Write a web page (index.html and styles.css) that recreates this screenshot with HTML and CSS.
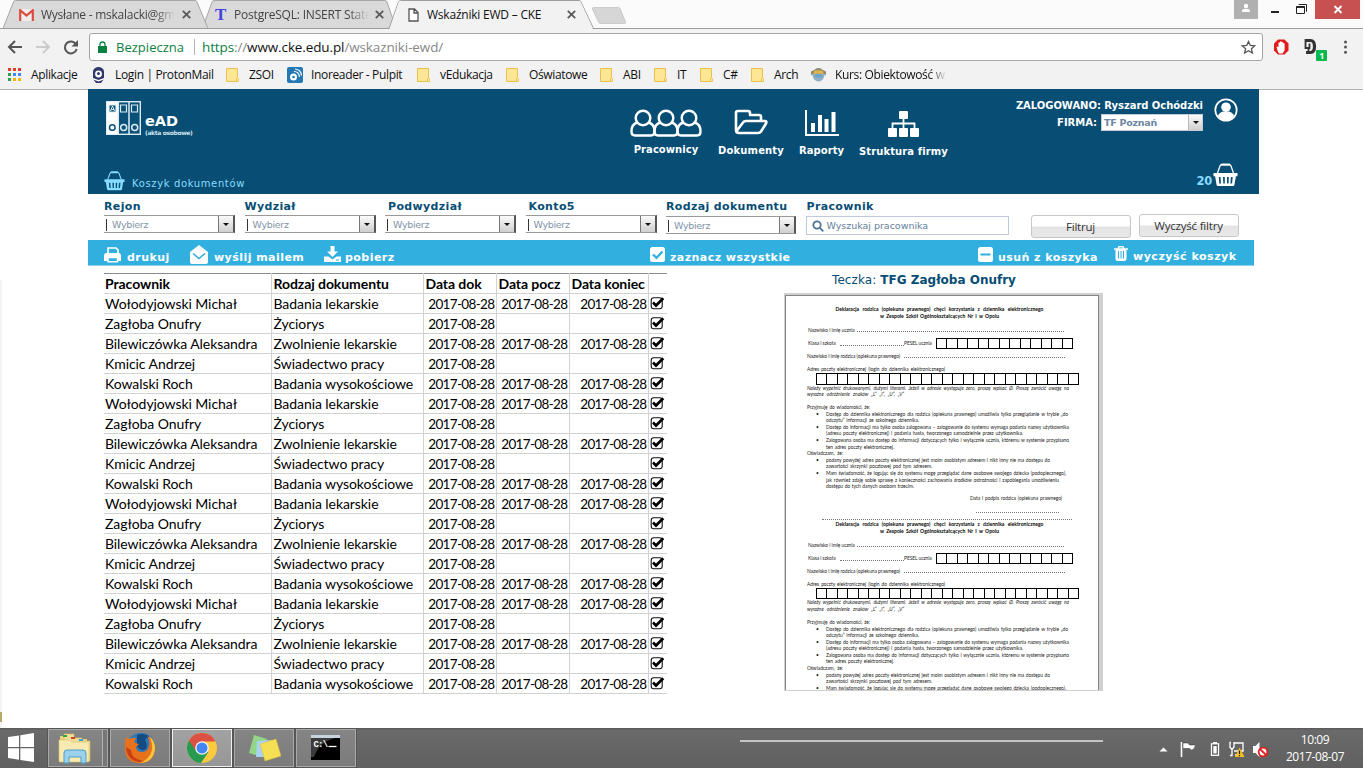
FILE: index.html
```html
<!DOCTYPE html>
<html lang="pl">
<head>
<meta charset="utf-8">
<title>Wskaźniki EWD – CKE</title>
<link rel="stylesheet" href="styles.css">
</head>
<body>
<svg width="0" height="0" class="defs">
  <symbol id="basket" viewBox="0 0 24 24"><path d="M4 10 6.500 3Q7 1.500 8.500 1.500" fill="none" stroke="currentColor" stroke-width="1.300"/><path d="M20 10 17.500 3Q17 1.500 15.500 1.500" fill="none" stroke="currentColor" stroke-width="1.300"/><rect x="7.500" y="0.400" width="9" height="2.400" rx="1.200" fill="currentColor"/><path d="M0 10h24v3.200h-1.600L21 21.500q-.2 1.500-1.500 1.500h-15Q3.200 23 3 21.500L1.600 13.200H0zM5.300 14l.5 6.500h1.700L7 14zm4.200 0 .3 6.500h1.500V14zm4 0v6.500H15l.3-6.500zm3.900 0-.5 6.500h1.700l.6-6.500z" fill="currentColor"/></symbol>
  <symbol id="person" viewBox="0 0 26 28"><path d="M7.500 13.500C3.500 14.500 1.500 18 1.500 22.500c0 2.800 1.500 4 3.500 4h16c2 0 3.500-1.200 3.500-4 0-4.500-2-8-6-9" fill="none" stroke="currentColor" stroke-width="2.400"/><circle cx="13" cy="9" r="7.300" fill="none" stroke="currentColor" stroke-width="2.400"/></symbol>
  <symbol id="folder" viewBox="0 0 14 17"><path d="M.5 2.500h11v9l-1 1.500v2.500H.5z" fill="#ffe694" stroke="#e9bf4d"/><path d="M10.500 15.500v-3l1-1 1 1v3z" fill="#ffe694" stroke="#e9bf4d" stroke-width=".8"/></symbol>
  <symbol id="close" viewBox="0 0 8 8"><path d="m.7.7 6.600 6.600m0-6.600L.7 7.300" stroke="#5a5a5a" stroke-width="1.600"/></symbol>
  <symbol id="check" viewBox="0 0 15 14"><rect x="1.200" y="1.800" width="11" height="11" rx="2.500" fill="#fff" stroke="#111" stroke-width="1.100"/><path d="m3 6.500 3 3 7.300-7.200" fill="none" stroke="#000" stroke-width="2.700"/></symbol>
</svg>

<div class="browser">
  <div class="tabs">
    <svg class="tabs-bg" width="640" height="29" viewBox="0 0 640 29">
      <path d="M202.500 28.500 212 2q.5-1.500 2-1.500h171q1.500 0 2 1.500l9 26.500z" fill="#d9d9d9" stroke="#a7a7a7"/>
      <path d="M3 28.500 13.500 2Q14 .5 15.500.5H195q1.500 0 2 1.500l11 26.500z" fill="#d9d9d9" stroke="#a7a7a7"/>
      <path d="M0 28.500h389L398.500 2q.5-1.500 2-1.500H579q1.500 0 2 1.500l12.500 26.500H640" fill="none" stroke="#9d9d9d"/>
      <path d="M389.500 29 398.800 2q.6-1 1.700-1H579q1 0 1.600 1L593 29z" fill="#f2f2f2"/>
      <path d="M592.500 9q-.5-1.500 1-1.500h25q1.200 0 1.800 1.500l5.200 13q.5 1.500-1 1.500h-24q-1.500 0-2-1.500z" fill="#d6d6d6" stroke="#cacaca"/>
    </svg>
    <div class="tab t1"><svg width="15" height="12" viewBox="0 0 15 12"><path d="M1 0h13v12H1z" fill="#eee"/><path d="M1.200 12V1.200L7.500 6.500l6.300-5.300V12" fill="none" stroke="#dd4b3e" stroke-width="2.200"/></svg><span class="tab-title fade">Wysłane - mskalacki@gm</span><svg width="9" height="9"><use href="#close"/></svg></div>
    <div class="tab t2"><b class="tico">T</b><span class="tab-title fade">PostgreSQL: INSERT State</span><svg width="9" height="9"><use href="#close"/></svg></div>
    <div class="tab t3"><svg width="11" height="14" viewBox="0 0 11 14"><path d="M1 1h5.500L10 4.500V13H1zM6 1v4h4" fill="#fff" stroke="#555" stroke-width="1.300"/></svg><span class="tab-title">Wskaźniki EWD – CKE</span><svg width="9" height="9"><use href="#close"/></svg></div>
    <div class="winbtns">
      <div class="user"><svg width="24" height="19"><circle cx="12" cy="6" r="2.200" fill="#fff"/><path d="M8 12V11q0-2.200 4-2.200t4 2.200v1z" fill="#fff"/></svg></div>
      <svg width="57" height="19"><path d="M13 12h8" stroke="#222" stroke-width="2"/><path d="M38.500 6.500h8v7h-8zM41 5V4.500h7.500v7H48" fill="none" stroke="#222"/><path d="M38 7.200h9" stroke="#222" stroke-width="1.500"/></svg>
      <div class="x"><svg width="45" height="19"><path d="m19.500 6 7 7m0-7-7 7" stroke="#fff" stroke-width="1.900"/></svg></div>
    </div>
  </div>
  <div class="toolbar">
    <svg width="89" height="32" viewBox="0 29 89 32" fill="none"><path d="M22 47H9m6-6-6 6 6 6" stroke="#555" stroke-width="2"/><path d="M36 47h13m-6-6 6 6-6 6" stroke="#ccc" stroke-width="2"/><path d="M76 44.200A6 6 0 1 0 76.700 49" stroke="#555" stroke-width="2"/><path d="M78 40v6.500h-6.500z" fill="#555"/></svg>
    <div class="omni">
      <svg width="9" height="12" viewBox="0 0 9 12"><path d="M0 5h9v7H0z" fill="#0b8043"/><path d="M2 5.500V3.300Q2 1 4.500 1T7 3.300v2.200" fill="none" stroke="#0b8043" stroke-width="1.300"/></svg>
      <span class="secure">Bezpieczna</span><span class="url"><em>https</em>://<b>www.cke.edu.pl</b>/wskazniki-ewd/</span>
      <svg class="star" width="15" height="15" viewBox="0 0 15 15"><path d="m7.500 1.500 1.800 4 4.400.4-3.300 2.900 1 4.200-3.900-2.300L3.600 13l1-4.200L1.300 5.900l4.400-.4z" fill="none" stroke="#555" stroke-width="1.300"/></svg>
    </div>
    <svg width="100" height="32" viewBox="1263 29 100 32"><path d="M1278 39.500h6.500l4 4v7l-4 4H1278l-4-4v-7z" fill="#e01b1b"/><path d="m1278 52-1.500-5 1.300-.5.700 1v-5h1.500v-1h1.700v.7h1.500v1h1.400v7l-2 3.300h-3.500z" fill="#fff"/><path d="M1306 40.500h4.500q4 0 4 6t-4 6h-4.500" fill="none" stroke="#333" stroke-width="3.200"/><path d="M1305.500 39v9h4v-4.500M1308.500 47v6" fill="none" stroke="#333" stroke-width="1.800"/><rect x="1316" y="50" width="11" height="11" rx="1" fill="#07b84f"/><text x="1319.300" y="59" class="badge">1</text><g fill="#555"><circle cx="1345.500" cy="42" r="1.500"/><circle cx="1345.500" cy="47" r="1.500"/><circle cx="1345.500" cy="52.200" r="1.500"/></g></svg>
  </div>
  <div class="bookmarks">
    <div class="bm b1"><svg width="14" height="14"><g fill="#e33b2e"><path d="M0 0h3v3H0zM5 0h3v3H5zM10 0h3v3h-3z"/></g><path d="M0 5h3v3H0zM0 10h3v3H0z" fill="#2d9d59"/><path d="M5 5h3v3H5zM10 5h3v3h-3z" fill="#4285f4"/><path d="M5 10h3v3H5zM10 10h3v3h-3z" fill="#f4b400"/></svg><span>Aplikacje</span></div>
    <div class="bm b2"><svg width="13" height="16" viewBox="0 0 13 16"><path d="M1 4q1.500-4 5.500-4T12 4v8l-3 4H4l-3-4z" fill="#33386b"/><circle cx="6.500" cy="7" r="3.400" fill="#fff"/><circle cx="6.500" cy="6.500" r="1.500" fill="#33386b"/><path d="m1 11 5.500 2 5.500-2v1.500l-5.500 2-5.500-2z" fill="#fff"/></svg><span>Login | ProtonMail</span></div>
    <div class="bm b3"><svg width="14" height="17"><use href="#folder"/></svg><span>ZSOI</span></div>
    <div class="bm b4"><svg width="16" height="16"><rect width="16" height="16" rx="2" fill="#2478b5"/><circle cx="6.500" cy="10" r="3.500" fill="#fff"/><circle cx="6.500" cy="10" r="1.300" fill="#2478b5"/><path d="M7 4.500q5 0 5.500 5.500M8 2q6 .5 6.500 6.500" stroke="#fff" stroke-width="1.200" fill="none"/></svg><span>Inoreader - Pulpit</span></div>
    <div class="bm b5"><svg width="14" height="17"><use href="#folder"/></svg><span>vEdukacja</span></div>
    <div class="bm b6"><svg width="14" height="17"><use href="#folder"/></svg><span>Oświatowe</span></div>
    <div class="bm b7"><svg width="14" height="17"><use href="#folder"/></svg><span>ABI</span></div>
    <div class="bm b8"><svg width="14" height="17"><use href="#folder"/></svg><span>IT</span></div>
    <div class="bm b9"><svg width="14" height="17"><use href="#folder"/></svg><span>C#</span></div>
    <div class="bm b10"><svg width="14" height="17"><use href="#folder"/></svg><span>Arch</span></div>
    <div class="bm b11"><svg width="15" height="15"><ellipse cx="7.500" cy="8" rx="6" ry="6.500" fill="#8fb0c4"/><path d="M0 4.500 3 3q4.500-4 9 0l3 1.500v4l-2.500-2-5 1-5-1L0 8.500z" fill="#8c8a78"/><path d="M3.500 3.500h8l1 3-2.500 1.500-2.500-1L5 8 2.500 6.500z" fill="#e9b443"/><path d="M3.500 7.500q4-2 8 0l-1 3h-6z" fill="#6aa5cf"/></svg><span class="fade2">Kurs: Obiektowość w</span></div>
  </div>
</div>

<main class="viewport">
  <div class="sliver"></div>
  <div class="app">
    <header>
      <div class="head-left">
        <div class="logo"><svg width="35" height="34" viewBox="0 0 35 34"><rect x=".7" y=".7" width="33.600" height="32.600" fill="#0a5179" stroke="#dcebf3" stroke-width="1.400"/><path d="M1 1h11v32H1z" fill="#fff"/><path d="M23 1v32M12.300 1v32" stroke="#dcebf3" stroke-width="1.500"/><path d="M3 4h7v7H3zM14.500 4h6v7h-6zM25.500 4h6v7h-6z" fill="#0a5179" stroke="#dcebf3" stroke-width="1.200"/><path d="m4.500 10 2-5 2 5M5 8.500h3" stroke="#dcebf3" fill="none"/><g fill="none" stroke-width="1.500"><circle cx="6.300" cy="26.500" r="2.800" stroke="#0a5179"/><circle cx="17.700" cy="26.500" r="3" stroke="#dcebf3"/><circle cx="28.700" cy="26.500" r="3" stroke="#dcebf3"/></g></svg>
          <div class="logo-text"><b>eAD</b><small>(akta osobowe)</small></div></div>
        <div class="cart"><svg width="21" height="20"><use href="#basket"/></svg><span>Koszyk dokumentów</span></div>
      </div>
      <nav>
        <a class="n1"><span class="people"><svg width="26" height="28"><use href="#person"/></svg><svg width="26" height="28"><use href="#person"/></svg><svg width="26" height="28"><use href="#person"/></svg></span>Pracownicy</a>
        <a class="n2"><svg width="34" height="26" viewBox="0 0 34 26" fill="none" stroke="#fff" stroke-width="2.600" stroke-linejoin="round"><path d="M27 11V8q0-2-2-2H16V4q0-2-2-2H4Q2 2 2 4v17q0 3 3 3M5 24h19q2 0 3-1.500l5-8q1.200-2.500-1-2.500H12q-2 0-3 1.500l-6 8Q2.500 24 5 24"/></svg>Dokumenty</a>
        <a class="n3"><svg width="34" height="26" viewBox="0 0 34 26"><path d="M1 0v25h33" fill="none" stroke="#fff" stroke-width="2"/><path d="M6 13h4v9H6zM13 5h4v17h-4zM19.500 9h4v13h-4zM26.500 2h4v20h-4z" fill="#fff"/></svg>Raporty</a>
        <a class="n4"><svg width="31" height="26" viewBox="0 0 31 26" fill="#fff"><rect x="11" width="9" height="8" rx="1"/><rect y="17" width="9" height="9" rx="1"/><rect x="11" y="17" width="9" height="9" rx="1"/><rect x="22" y="17" width="9" height="9" rx="1"/><path d="M15.500 6v12M4.500 18v-5.500h22V18" fill="none" stroke="#fff" stroke-width="1.800"/></svg>Struktura firmy</a>
      </nav>
      <div class="head-right">
        <div class="who">
          <div class="who-text"><div>ZALOGOWANO: Ryszard Ochódzki</div><div class="firm"><span>FIRMA:</span><span class="firm-select">TF Poznań<i class="drop"></i></span></div></div>
          <svg width="24" height="24" viewBox="0 0 24 24"><circle cx="12" cy="12" r="10.700" fill="none" stroke="#fff" stroke-width="1.700"/><circle cx="12" cy="9.200" r="4.800" fill="#fff"/><path d="M4 18q.5-3 5-4.500h6q4.500 1.500 5 4.500-3 4.500-8 4.500T4 18z" fill="#fff"/></svg>
        </div>
        <div class="count"><span>20</span><svg width="25" height="24"><use href="#basket"/></svg></div>
      </div>
    </header>

    <section class="filters">
      <div class="f"><label>Rejon</label><div class="sel"><span>Wybierz</span><i class="drop"></i></div></div>
      <div class="f"><label>Wydział</label><div class="sel"><span>Wybierz</span><i class="drop"></i></div></div>
      <div class="f inset"><label>Podwydział</label><div class="sel"><span>Wybierz</span><i class="drop"></i></div></div>
      <div class="f inset"><label>Konto5</label><div class="sel"><span>Wybierz</span><i class="drop"></i></div></div>
      <div class="f low"><label>Rodzaj dokumentu</label><div class="sel"><span>Wybierz</span><i class="drop"></i></div></div>
      <div class="f low search-f"><label>Pracownik</label><div class="search"><svg width="12" height="12" viewBox="0 0 12 12" fill="none" stroke="#4e7396" stroke-width="1.800"><circle cx="5" cy="5" r="3.700"/><path d="m7.800 7.800 3.500 3.500"/></svg><span>Wyszukaj pracownika</span></div></div>
      <button class="btn1">Filtruj</button><button class="btn2">Wyczyść filtry</button>
    </section>

    <section class="actions">
      <div class="a1"><svg width="18" height="16" viewBox="0 0 18 16"><path d="M4 7V1h8l2 2v4" fill="none" stroke="#fff" stroke-width="1.700"/><path d="M0 9q0-3 2.500-3h12Q17 6 17 9v5H0z" fill="#fff"/><path d="M4 10.500h9.500v4.200H4z" fill="#31b0df" stroke="#fff" stroke-width="1.500"/></svg><span>drukuj</span></div>
      <div class="a2"><svg width="18" height="19" viewBox="0 0 18 19"><path d="M0 7 9 0l9 7v10q0 2-2 2H2q-2 0-2-2z" fill="#fff"/><path d="m3 8.500 6 5 6-5" fill="none" stroke="#31b0df" stroke-width="1.600"/></svg><span>wyślij mailem</span></div>
      <div class="a3"><svg width="17" height="16" viewBox="0 0 17 16" fill="#fff"><path d="M6.500 0h4v5.500H14l-5.500 5.500L3 5.500h3.500z"/><path d="M0 10.500h4.500l4 3 4-3H17V16H0z"/><path d="M12 14h3" stroke="#31b0df"/></svg><span>pobierz</span></div>
      <div class="a4"><svg width="15" height="15"><rect width="15" height="15" rx="2.500" fill="#fff"/><path d="m3 7.500 3.500 3.300L12.500 4.500" fill="none" stroke="#31b0df" stroke-width="2.300"/></svg><span>zaznacz wszystkie</span></div>
      <div class="a5"><svg width="15" height="15"><rect width="15" height="15" rx="2.500" fill="#fff"/><path d="M2.500 7.500h10" stroke="#31b0df" stroke-width="2"/></svg><span>usuń z koszyka</span></div>
      <div class="a6"><svg width="14" height="15" viewBox="0 0 14 15"><path d="M4 2.500 5 .7h4l1 1.800M0 3h14" fill="none" stroke="#fff" stroke-width="1.400"/><path d="M1.500 3h11v10q0 2-2 2h-7q-2 0-2-2z" fill="#fff"/><path d="M4.500 5v7.500M7 5v7.500M9.500 5v7.500" stroke="#31b0df" stroke-width="1"/></svg><span>wyczyść koszyk</span></div>
    </section>

    <section class="content">
      <table>
        <colgroup><col class="c1"><col class="c2"><col class="c3"><col class="c4"><col class="c5"><col class="c6"></colgroup>
        <thead><tr><th>Pracownik</th><th>Rodzaj dokumentu</th><th>Data dok</th><th>Data pocz</th><th>Data koniec</th><th></th></tr></thead>
        <tbody id="rows"></tbody>
      </table>
      <div class="folder-pane">
        <h2>Teczka: <b>TFG Zagłoba Onufry</b></h2>
        <div class="preview"><div class="sheet" id="sheet"></div></div>
      </div>
    </section>
  </div>
</main>

<footer class="taskbar">
  <svg class="start" width="48" height="40"><path d="m8 9 11-1.600V19H8zM20.300 7.200 34 5v14H20.300zM8 20.300h11v11.500L8 30zM20.300 20.300H34V34l-13.700-2z" fill="#fff"/></svg>
  <div class="task stack"><svg width="34" height="34" viewBox="0 0 34 34"><path d="M2 5h11l2 3h14v22H2z" fill="#e9d27a"/><path d="M6 3h10v4h8v3h8v20H6z" fill="#f1df96" stroke="#d8c06a" stroke-width=".6"/><path d="M1 9h11l2 2h17v19q0 1-1 1H2q-1 0-1-1z" fill="#f8eab0" stroke="#d9c270" stroke-width=".6"/><path d="M5 4h4v2H5z" fill="#28a745"/><path d="M13 6h4v2h-4z" fill="#d0402c"/><path d="M21 8h4v2h-4z" fill="#3d9ee0"/><path d="M6 32V22q0-3 3-3h16q3 0 3 3v10h-5v-6H11v6z" fill="#9bd0ea" stroke="#4c9fc9"/></svg></div>
  <div class="task"><svg width="32" height="32" viewBox="0 0 32 32"><circle cx="17" cy="15" r="14" fill="#2b78b8"/><path d="M13 3q8-3 13 2-4 0-5 3 3 5 1 9-5 3-9-3z" fill="#164a83"/><path d="M2 5q2 2 4 2 3-2 6-1-2 3-1 5l4 1-3 3q0 5 7 5 5-1 6-6 1-6-2-10 8 3 8 13-1 14-15 14T1 18Q0 11 2 5z" fill="#e8721c"/><path d="M25 4q6 5 6 12-1 14-15 15 10-4 12-13 1-7-3-14z" fill="#fcc63b"/><path d="M2 15q1 13 13 15l5-1Q7 27 7 18z" fill="#ca3d17"/></svg></div>
  <div class="task active"><svg width="30" height="30" viewBox="0 0 30 30"><circle cx="15" cy="15" r="15" fill="#fbc93e"/><path d="M2 7.500A15 15 0 0 0 14 30l7.500-11.300L15 15z" fill="#269b50"/><path d="M2 7.500A15 15 0 0 1 28.500 8.500H15L9 18z" fill="#dd5044"/><circle cx="15" cy="15" r="6.800" fill="#f5f5f5"/><circle cx="15" cy="15" r="5.500" fill="#4286f4"/></svg></div>
  <div class="task"><svg width="34" height="28" viewBox="0 0 34 28"><path d="m7 1 13 4-5 18-13-4z" fill="#93d687"/><path d="m10 7 15-1-1 17H9z" fill="#a9d3f3"/><path d="m13 10 16-5 5 17-16 5z" fill="#f5df54" stroke="#d9be37" stroke-width=".5"/></svg></div>
  <div class="task"><svg width="30" height="26" viewBox="0 0 30 26"><path d="M0 0h29v25H0z" fill="#000"/><path d="M0 0h29v3H0z" fill="#c9d3de"/><path d="M0 3h24Q8 7 3 22H0z" fill="#3c3c3c"/><text x="2.500" y="12" class="cmd">C:\</text><path d="M17.500 11.500h8" stroke="#fff" stroke-width="1.300"/></svg></div>
  <div class="band"></div>
  <svg class="tray" width="125" height="40" viewBox="1155 728 125 40"><path d="m1159.500 751.500 4-4 4 4z" fill="#fff"/><path d="M1181.500 742v15" stroke="#fff" stroke-width="1.600"/><path d="M1183 743h5l1.500 2h6q-1 5-4 5l-2-1.500h-6.500z" fill="#fff" stroke="#333" stroke-width=".5"/><path d="M1213 744v-2h4v2" fill="#fff"/><rect x="1211.500" y="743.800" width="7" height="11.500" fill="#555" stroke="#fff" stroke-width="1.300"/><path d="M1213.300 746h3.400v7.500h-3.400z" fill="#fff"/><path d="M1234 743h9v8h-9M1231 742.500h-1v5l2 2v6h-2M1234 742v5l-2 2.500M1235 755h6" fill="none" stroke="#fff" stroke-width="1.300"/><path d="m1239.500 747.500 5 9.500h-9.500z" fill="#f8c01e"/><path d="M1239.500 750.500v3.500m0 1v1.200" stroke="#222" stroke-width="1.200"/><path d="M1253 746h2.500l4-4v15l-4-4h-2.500z" fill="#fff"/><circle cx="1263" cy="752" r="4.300" fill="#fff" stroke="#e02020" stroke-width="1.800"/><path d="m1260 749 6 6" stroke="#e02020" stroke-width="1.800"/></svg>
  <div class="clock"><div>10:09</div><div>2017-08-07</div></div>
</footer>
<script src="app.js"></script>
</body>
</html>
```
FILE: styles.css
```css
* { box-sizing: border-box; }
body { margin: 0; width: 1363px; height: 768px; overflow: hidden; background: #fff; display: flex; flex-direction: column; font-family: "Open Sans", "Noto Sans", sans-serif; }
svg { display: block; flex: none; }
.defs { position: absolute; }

.browser { height: 90px; background: #f2f2f2; border-bottom: 1px solid #b5b5b5; }
.tabs { position: relative; height: 29px; background: #fbfbfb; border-bottom: 1px solid #9d9d9d; display: flex; }
.tabs-bg { position: absolute; left: 0; top: 0; }
.tab { position: relative; display: flex; align-items: center; height: 29px; font-size: 12px; letter-spacing: -.25px; color: #444; white-space: nowrap; }
.tab-title { overflow: hidden; }
.t1 { width: 194px; padding-left: 19px; }
.t1 .tab-title { width: 134px; margin: 0 7px 0 7px; }
.t2 { width: 193px; padding-left: 21px; letter-spacing: -.2px; }
.t2 .tab-title { width: 135px; margin: 0 6px 0 8px; }
.t3 { width: 210px; padding-left: 21px; color: #111; }
.t3 .tab-title { width: 133px; margin: 0 7px 0 8px; letter-spacing: -.22px; }
.tico { font: bold 17px "Liberation Serif", serif; width: 11px; color: #4443e0; }
.fade { -webkit-mask-image: linear-gradient(90deg, #000 85%, transparent); mask-image: linear-gradient(90deg, #000 85%, transparent); }
.winbtns { display: flex; margin-left: auto; padding-right: 3px; height: 19px; }
.user { background: #b0b0b0; width: 24px; }
.x { background: #c75050; width: 45px; }

.toolbar { height: 32px; display: flex; }
.omni { flex: 1; margin-top: 4px; height: 28px; border: 1px solid #a6a6a6; border-radius: 3px; background: #fff; display: flex; align-items: center; padding: 0 6px 0 8px; white-space: nowrap; }
.secure { color: #0b8043; font-size: 13px; letter-spacing: .02px; margin-left: 9px; width: 79px; line-height: 16px; border-right: 1px solid #b4b4b4; }
.url { color: #888; font-size: 13.500px; letter-spacing: -.12px; margin-left: 7px; }
.url em { color: #0b8043; font-style: normal; }
.url b { color: #111; font-weight: 400; }
.star { margin-left: auto; }
.badge { font: bold 9px "Open Sans", sans-serif; fill: #fff; }
.bookmarks { display: flex; height: 27px; font-size: 12px; letter-spacing: -.35px; color: #111; padding-left: 8px; }
.bm { display: flex; align-items: center; gap: 9px; white-space: nowrap; flex: none; }
.b1 { width: 84px; } .b2 { width: 134px; gap: 10px; } .b3 { width: 61px; } .b4 { width: 130px; gap: 8px; }
.b5 { width: 89px; } .b6 { width: 94px; } .b7 { width: 54px; } .b8 { width: 46px; }
.b9 { width: 51px; } .b10 { width: 60px; } .b11 { width: 140px; }
.fade2 { -webkit-mask-image: linear-gradient(90deg, #000 85%, transparent 102%); mask-image: linear-gradient(90deg, #000 85%, transparent 102%); }

.viewport { height: 638px; display: flex; }
.sliver { width: 2px; height: 448px; margin-top: 190px; background: linear-gradient(#f3f3f3 0 432px, #b5a868 432px 442px, #f3f3f3 442px); }
.app { margin-left: 86px; width: 1171px; margin-top: -1px; font-family: "DejaVu Sans", sans-serif; }

header { height: 105px; background: #074d74; color: #fff; display: flex; font-size: 10px; }
.head-left { width: 524px; padding: 12px 0 0 16px; }
.logo { display: flex; gap: 4px; height: 70px; padding-left: 2px; }
.logo-text { padding-top: 13px; line-height: 15px; }
.logo-text b { display: block; font-size: 14.500px; }
.logo-text small { display: block; font-size: 6px; line-height: 8px; font-weight: bold; letter-spacing: -.35px; color: #cfe2ec; }
.cart { display: flex; align-items: center; gap: 7px; color: #88dcff; letter-spacing: .63px; padding-left: 0; }
.cart span { padding-top: 4px; }
nav { display: flex; width: 352px; font-weight: bold; }
nav a { display: flex; flex-direction: column; align-items: center; white-space: nowrap; line-height: 12px; }
.people { display: flex; margin-bottom: 7px; }
.people svg + svg { margin-left: -3px; }
.n1 { width: 108px; padding-top: 20px; letter-spacing: .05px; }
.n2 { width: 62px; padding-top: 20px; letter-spacing: .15px; } .n2 svg { margin-bottom: 10px; }
.n3 { width: 79px; padding-top: 21px; letter-spacing: .05px; } .n3 svg { margin-bottom: 9px; }
.n4 { width: 85px; padding-top: 22px; letter-spacing: .1px; } .n4 svg { margin-bottom: 9px; }
.head-right { margin-left: auto; padding: 9px 21px 0 0; font-weight: bold; }
.who { display: flex; gap: 11px; height: 65px; letter-spacing: -.04px; }
.who-text { line-height: 15px; white-space: nowrap; }
.firm { display: flex; justify-content: flex-end; gap: 4px; padding-top: 1px; line-height: 17px; }
.firm-select { display: flex; justify-content: space-between; width: 102px; height: 17px; padding-left: 2px; color: #6c86a3; background: #fff; border: 1px solid #c4cdd5; line-height: 15px; font-size: 9.500px; letter-spacing: -.25px; }
.drop { width: 15px; align-self: stretch; border-left: 1px solid #777; background: linear-gradient(#fafafa, #cfcfcf); display: grid; place-items: center; }
.firm-select .drop { border-left-color: #bbb; width: 14px; }
.drop::before { content: ""; border: 3px solid transparent; border-top: 3px solid #111; border-bottom: 0; }
.count { display: flex; justify-content: flex-end; align-items: flex-end; font-size: 11.500px; color: #88dcff; }
.count svg { color: #fff; }
.count span { line-height: 11px; letter-spacing: -.3px; padding-right: 1px; }

.filters { height: 46px; display: flex; padding: 5px 0 0 16px; }
.f { width: 140.500px; }
.f label { display: block; font-weight: bold; font-size: 11px; line-height: 15px; letter-spacing: .35px; color: #074d74; height: 16px; white-space: nowrap; }
.f.inset label { padding-left: 3px; }
.f.low label { height: 17px; }
.sel { display: flex; justify-content: space-between; width: 131px; height: 18px; border: 1px solid #999; border-left: 0; border-right-width: 2px; border-right-color: #555; font-size: 9.500px; letter-spacing: -.3px; color: #8193a8; line-height: 16px; }
.sel span { border-left: 1px solid #333; height: 12px; line-height: 12px; margin: 3px 0 0 2px; padding-left: 5px; }
.low .sel { width: 130px; }
.search { width: 203px; height: 19px; border: 1px solid #c3c7da; display: flex; align-items: center; gap: 3px; padding-left: 5px; font-size: 9.500px; letter-spacing: -.02px; color: #63809c; white-space: nowrap; margin-left: -1px; }
.search-f { width: 223px; }
button { width: 100px; height: 23px; border: 1px solid #c7c7c7; border-radius: 3px; background: linear-gradient(#fff 48%, #e3e3e3 52%, #e9e9e9); color: #333; font: 11.500px "Open Sans", sans-serif; letter-spacing: -.2px; padding: 0; }
.btn1 { margin-top: 16px; margin-left: 1px; }
.btn2 { margin-top: 15px; margin-left: 8px; }

.actions { width: 1166px; height: 26px; background: #31b0df; border-bottom: 1px solid #8cd4f0; display: flex; color: #fff; font-weight: bold; font-size: 11px; letter-spacing: .45px; padding-left: 16px; white-space: nowrap; }
.actions div { display: flex; height: 25px; }
.actions svg { margin-top: 7px; }
.actions span { line-height: 15px; padding-top: 10px; }
.a1 { width: 86px; gap: 5px; } .a2 { width: 134px; gap: 6px; } .a2 svg { margin-top: 5px; } .a3 { width: 326px; gap: 4px; } .a3 svg { margin-top: 6px; }
.a4 { width: 328px; gap: 5px; } .a5 { width: 136px; gap: 5px; } .a6 { gap: 5px; letter-spacing: .52px; } .actions .a6 svg { margin-top: 6px; } .a6 span { margin-top: -1px; }

.content { display: flex; padding: 7px 0 0 16px; }
table { table-layout: fixed; width: 563px; height: 421px; border-collapse: collapse; font: 14px/18px Lato, sans-serif; color: #000; letter-spacing: -.07px; }
.c1 { width: 167px; } .c2 { width: 152px; } .c3 { width: 73px; } .c4 { width: 73px; } .c5 { width: 79px; } .c6 { width: 19px; }
tr { height: 20px; }
th, td { padding: 0 1px 0 2px; height: 20px; white-space: nowrap; text-align: left; border: 1px solid #d2d2d2; overflow: visible; }
td:first-child, th:first-child { padding-left: 1px; }
th { border-top-color: #8a8a8a; }
td.d { text-align: right; font-size: 13.500px; letter-spacing: -.64px; }
th:first-child, td:first-child { border-left: 0; }
th:last-child, td:last-child { border-right: 0; }
td:last-child { padding: 0 1px; }
td svg { margin-top: -2px; }

.folder-pane { margin-left: 117px; width: 320px; }
h2 { margin: 0; height: 20px; padding: 0 0 0 48px; font-size: 12px; line-height: 14px; font-weight: 400; color: #074d74; letter-spacing: .1px; white-space: nowrap; }
h2 b { letter-spacing: 0; }
.preview { width: 319px; height: 398px; overflow: hidden; background: #d0d0d0; padding: 2px 4px 0 1px; }
.sheet { height: 395px; overflow: hidden; border: 1px solid #858585; border-bottom: 0; background: #fff; padding: 10px 0 0 21px; font: 4.900px/6.600px Lato, sans-serif; color: #222; letter-spacing: -.06px; }
.form { height: 214.800px; }
.line { height: 6.600px; white-space: nowrap; text-align-last: justify; }
.title { font-weight: bold; color: #000; font-size: 5px; letter-spacing: .02px; }
.note { font-style: italic; letter-spacing: -.03px; }
.bullet { display: flex; }
.bullet::before { content: "•"; width: 10px; margin-left: -10px; text-align-last: left; }
.bullet span { flex: 1; }
.klasa { display: flex; align-items: center; height: 12px; }
.dots { border-bottom: 1px dotted #777; height: 5px; flex: none; }
.row { display: flex; height: 6.600px; white-space: nowrap; }
.boxes { display: flex; height: 11.500px; border: 1px solid #000; border-left: 0; flex: none; }
.boxes i { flex: 1; border-left: 1px solid #000; }

.taskbar { height: 40px; background: linear-gradient(#5c5c5c 0 1px, #6a6a6a 2px, #606060); display: flex; align-items: center; }
.task { width: 60px; height: 38px; margin-right: 2px; border: 1px solid #a9a9a9; outline: 1px solid #555; outline-offset: 0; background: linear-gradient(#858585, #7b7b7b); display: grid; place-items: center; }
.stack { box-shadow: inset -4px 0 #777, inset -5px 0 #b0b0b0; padding-right: 6px; }
.task.active { border-color: #f0f0f0; background: linear-gradient(#a2a2a2, #969696); }
.cmd { font: bold 9px "Liberation Mono", monospace; letter-spacing: -.8px; fill: #fff; }
.band { width: 363px; height: 2px; background: #c4c4c4; margin: 0 0 14px 382px; }
.tray { margin-left: 52px; }
.clock { width: 70px; text-align: center; color: #fff; font-size: 12px; line-height: 17px; letter-spacing: -.45px; }
```
FILE: app.js
```js
const people = [
  ["Wołodyjowski Michał", "Badania lekarskie", true],
  ["Zagłoba Onufry", "Życiorys", false],
  ["Bilewiczówka Aleksandra", "Zwolnienie lekarskie", true],
  ["Kmicic Andrzej", "Świadectwo pracy", false],
  ["Kowalski Roch", "Badania wysokościowe", true],
];
const date = "2017-08-28";
const rows = [];
for (let i = 0; i < 20; i++) {
  const [name, doc, full] = people[i % 5];
  const extra = full ? date : "";
  rows.push(`<tr><td>${name}</td><td>${doc}</td><td class="d">${date}</td><td class="d">${extra}</td><td class="d">${extra}</td><td><svg width="15" height="14"><use href="#check"/></svg></td></tr>`);
}
document.getElementById("rows").innerHTML = rows.join("");

// line: text, left offset, width, gap above, class
const line = (text, left, width, gap = 0, cls = "") =>
  `<div class="line ${cls}" style="margin:${gap}px 0 0 ${left}px;width:${width}px"><span>${text}</span></div>`;
const dots = (w) => `<span class="dots" style="width:${w}px"></span>`;
const boxes = (n, w) => `<div class="boxes" style="width:${w}px">${"<i></i>".repeat(n)}</div>`;

const head = `
${line("Deklaracja rodzica (opiekuna prawnego) chęci korzystania z dziennika elektronicznego", 28.5, 208, 0, "title")}
${line("w Zespole Szkół Ogólnokształcących Nr I w Opolu", 73, 119, 0.2, "title")}
<div class="row" style="margin:7.5px 0 0 1px"><span style="width:49px">Nazwisko i imię ucznia</span>${dots(207)}</div>
<div class="klasa" style="margin:4px 0 0 1px"><span style="width:32px">Klasa i szkoła</span>${dots(64)}<span style="width:32px">PESEL ucznia</span>${boxes(13, 137)}</div>
<div class="row" style="margin:3.8px 0 0 0"><span style="width:97px">Nazwisko i imię rodzica (opiekuna prawnego)</span>${dots(161)}</div>
${line("Adres poczty elektronicznej (login do dziennika elektronicznego)", 0, 138, 6.4)}
<div style="margin:0.2px 0 0 9px">${boxes(25, 263)}</div>
${line("Należy wypełnić drukowanymi, dużymi literami. Jeżeli w adresie występuje zero, proszę wpisać Ø. Proszę zwrócić uwagę na", 0, 262, 0, "note")}
${line("wyraźne odróżnienie znaków „L” „I”, „U”, „V”", 0, 97, 0, "note")}
${line("Przyjmuję do wiadomości, że:", 0, 63, 6.4)}
${line("Dostęp do dziennika elektronicznego dla rodzica (opiekuna prawnego) umożliwia tylko przeglądanie w trybie „do", 19, 242, 0, "bullet")}
${line("odczytu” informacji ze szkolnego dziennika.", 19, 93)}
${line("Dostęp do informacji ma tylko osoba zalogowana – zalogowanie do systemu wymaga podania nazwy użytkownika", 19, 243, 0, "bullet")}
${line("(adresu poczty elektronicznej) i podania hasła, tworzonego samodzielnie przez użytkownika.", 19, 197)}
${line("Zalogowana osoba ma dostęp do informacji dotyczących tylko i wyłącznie ucznia, któremu w systemie przypisano", 19, 243, 0, "bullet")}
${line("ten adres poczty elektronicznej.", 19, 68)}
${line("Oświadczam, że:", 0, 36)}
${line("podany powyżej adres poczty elektronicznej jest moim osobistym adresem i nikt inny nie ma dostępu do", 19, 224, 0, "bullet")}
${line("zawartości skrzynki pocztowej pod tym adresem.", 19, 106)}
${line("Mam świadomość, że logując się do systemu mogę przeglądać dane osobowe swojego dziecka (podopiecznego),", 19, 240, 0, "bullet")}`;

const tail = `
${line("jak również zdaję sobie sprawę z konieczności zachowania środków ostrożności i zapobiegania umożliwieniu", 19, 233)}
${line("dostępu do tych danych osobom trzecim.", 19, 88)}
${line("Data i podpis rodzica (opiekuna prawnego)", 163, 92, 5)}
<div class="row" style="margin:7px 0 0 169px">${dots(83)}</div>
<div class="row" style="margin:0 0 0 15px">${dots(250)}</div>`;

document.getElementById("sheet").innerHTML =
  `<div class="form">${head}${tail}</div><div class="form">${head}</div>`;
```
